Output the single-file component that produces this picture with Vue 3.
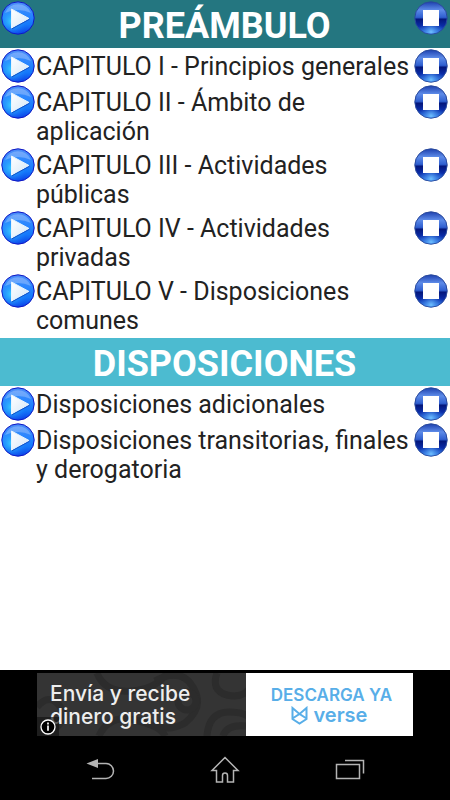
<template>
  <!-- shared gradients and symbols for the round buttons -->
  <svg class="defs" width="0" height="0" aria-hidden="true">
    <defs>
      <linearGradient id="play-ball" x1="0" y1="0" x2="0" y2="1">
        <stop offset="0" stop-color="#4d8df8" />
        <stop offset="0.4" stop-color="#2a86ff" />
        <stop offset="0.7" stop-color="#1478fa" />
        <stop offset="1" stop-color="#0b3fe6" />
      </linearGradient>
      <radialGradient id="play-glow" cx="0.3" cy="0.6" r="0.5">
        <stop offset="0" stop-color="#3ad0ff" />
        <stop offset="1" stop-color="#1a80ff" stop-opacity="0" />
      </radialGradient>
      <linearGradient id="play-arrow" x1="0" y1="0" x2="1" y2="1">
        <stop offset="0" stop-color="#ffffff" />
        <stop offset="1" stop-color="#d3e6f7" />
      </linearGradient>
      <linearGradient id="stop-ball" x1="0" y1="0" x2="0" y2="1">
        <stop offset="0" stop-color="#1c3fae" />
        <stop offset="0.25" stop-color="#5d8be8" />
        <stop offset="0.48" stop-color="#2f5fd0" />
        <stop offset="0.54" stop-color="#04177c" />
        <stop offset="0.75" stop-color="#0a2ca8" />
        <stop offset="1" stop-color="#3a8cf5" />
      </linearGradient>
      <radialGradient id="stop-glow" cx="0.5" cy="0.95" r="0.4">
        <stop offset="0" stop-color="#6fc0ff" />
        <stop offset="1" stop-color="#2a6be0" stop-opacity="0" />
      </radialGradient>
    </defs>
    <symbol id="icon-play" viewBox="0 0 34 34">
      <circle cx="17" cy="17" r="16.2" fill="url(#play-ball)" stroke="#1118c4" stroke-width="1" />
      <circle cx="17" cy="17" r="15.5" fill="url(#play-glow)" />
      <path d="M4 12a14 14 0 0 1 26 0q-13-6-26 0z" fill="#fff" opacity="0.25" />
      <path d="M10.5 8v19L28 17.5z" fill="url(#play-arrow)" stroke="#e8f4ff" stroke-width="1" stroke-linejoin="round" />
      <path d="M11 27.8l17.5-9.6" stroke="#1252c8" stroke-width="1" />
    </symbol>
    <symbol id="icon-stop" viewBox="0 0 34 34">
      <circle cx="17" cy="17" r="16.2" fill="url(#stop-ball)" stroke="#2a4a9c" stroke-width="1" />
      <circle cx="17" cy="17" r="15.5" fill="url(#stop-glow)" />
      <path d="M9 9h16v16H9z" fill="#fff" />
    </symbol>
  </svg>

  <div class="screen">
    <main class="content">
      <section v-for="section in sections" :key="section.title">
        <header class="bar" :class="section.tone">
          <button v-if="section.audio" class="round" :aria-label="`Reproducir ${section.title}`">
            <svg viewBox="0 0 34 34"><use href="#icon-play" /></svg>
          </button>
          <h2>{{ section.title }}</h2>
          <button v-if="section.audio" class="round" :aria-label="`Detener ${section.title}`">
            <svg viewBox="0 0 34 34"><use href="#icon-stop" /></svg>
          </button>
        </header>
        <ul class="list">
          <li v-for="item in section.items" :key="item" class="row">
            <button class="round" :aria-label="`Reproducir ${item}`">
              <svg viewBox="0 0 34 34"><use href="#icon-play" /></svg>
            </button>
            <a href="#" class="label">{{ item }}</a>
            <button class="round" :aria-label="`Detener ${item}`">
              <svg viewBox="0 0 34 34"><use href="#icon-stop" /></svg>
            </button>
          </li>
        </ul>
      </section>
    </main>

    <footer class="bottom">
      <a href="#" class="ad">
        <span class="ad-text">
          <svg class="ad-pattern" viewBox="0 0 209 63" preserveAspectRatio="xMidYMid slice" aria-hidden="true">
            <g fill="none" stroke="#2c2c2c" stroke-width="7">
              <path d="M0 34q12-14 22-2t-4 24" />
              <path d="M60 0q8 20 34 18t36-18" />
              <path d="M118 8q26-14 38 6t-8 36q-18 10-32 0" />
              <circle cx="150" cy="28" r="9" />
              <path d="M180 0q-6 18 10 22t24-8" />
              <path d="M170 63q2-24 22-24t24 10" />
              <path d="M186 63q4-12 23-10" />
              <path d="M62 63q10-22 36-16t30 16" />
            </g>
          </svg>
          <span class="ad-copy">Envía y recibe<br />dinero gratis</span>
          <svg class="ad-info" viewBox="0 0 22 19" aria-hidden="true">
            <path d="M0 0h22v19H0z" fill="#161616" fill-opacity="0.7" />
            <circle cx="11" cy="10" r="7" fill="#000" stroke="#fff" stroke-width="1.3" />
            <path d="M11 5.6v1.8M11 8.6v5.2" stroke="#fff" stroke-width="1.7" />
          </svg>
        </span>
        <span class="ad-action">
          <span class="ad-cta">DESCARGA YA</span>
          <span class="brand">
            <svg viewBox="0 0 17 19" aria-hidden="true">
              <path d="M1.5 2v11l7 4.5 7-4.5V2l-7 6zM1.5 12.5L8.5 8l7 4.5" />
            </svg>
            <span>verse</span>
          </span>
        </span>
      </a>

      <nav class="nav">
        <button aria-label="Atrás">
          <svg viewBox="0 0 30 30">
            <path d="M8 8.5h13a7 7 0 0 1 0 15H7" />
            <path d="M1.5 8.5L13 4v9z" class="solid" />
          </svg>
        </button>
        <button aria-label="Inicio">
          <svg viewBox="0 0 30 30">
            <path d="M15 2.500L2 15.500h4.500V27h6v-6.500q0-2.500 2.500-2.500t2.500 2.500V27h6V15.500H28z" />
          </svg>
        </button>
        <button aria-label="Recientes">
          <svg viewBox="0 0 30 30">
            <path d="M1.5 9.5h23v14h-23zM10 5.5h18.5v13" />
          </svg>
        </button>
      </nav>
    </footer>
  </div>
</template>

<script setup>
const sections = [
  {
    title: 'PREÁMBULO',
    tone: 'dark',
    audio: true,
    items: [
      'CAPITULO I - Principios generales',
      'CAPITULO II - Ámbito de aplicación',
      'CAPITULO III - Actividades públicas',
      'CAPITULO IV - Actividades privadas',
      'CAPITULO V - Disposiciones comunes'
    ]
  },
  {
    title: 'DISPOSICIONES',
    tone: 'light',
    audio: false,
    items: [
      'Disposiciones adicionales',
      'Disposiciones transitorias, finales y derogatoria'
    ]
  }
]
</script>

<style>
body {
  margin: 0;
  background: #fff;
}
</style>

<style scoped>
.defs {
  position: absolute;
}

.screen {
  display: flex;
  flex-direction: column;
  min-height: 100vh;
  font-family: Roboto, sans-serif;
  color: #222;
}

.content {
  flex: 1;
}

.bar {
  display: flex;
  align-items: flex-start;
  padding: 1px 2px 0 1px;
  color: #fff;
}

.bar.dark {
  background: #247680;
}

.bar.light {
  background: #4cbbd0;
}

.bar h2 {
  flex: 1;
  margin: 0;
  padding-top: 3px;
  font-size: 36px;
  line-height: 44px;
  font-weight: 700;
  text-align: center;
}

button {
  padding: 0;
  border: 0;
  background: none;
  cursor: pointer;
}

.round {
  flex: none;
  width: 34px;
  height: 34px;
}

.round svg {
  display: block;
  width: 100%;
  height: 100%;
}

.list {
  margin: 0;
  padding: 1px 0;
  list-style: none;
}

.row {
  display: flex;
  align-items: flex-start;
  gap: 1px;
  min-height: 35px;
  padding: 0 2px 1px 1px;
}

.label {
  flex: 1;
  padding: 3px 0 1px;
  font-size: 25px;
  line-height: 29px;
  color: inherit;
  text-decoration: none;
}

.bottom {
  padding-top: 3px;
  background: #000;
}

.ad {
  display: flex;
  max-width: 376px;
  height: 63px;
  margin: 0 auto;
  font-family: Inter, sans-serif;
  text-decoration: none;
}

.ad-text {
  position: relative;
  flex: 5;
  background: #343434;
  color: #eee;
}

.ad-pattern {
  position: absolute;
  width: 100%;
  height: 100%;
}

.ad-copy {
  position: relative;
  display: block;
  padding: 9px 0 0 13px;
  font-size: 21px;
  line-height: 23px;
  font-weight: 500;
  white-space: nowrap;
}

.ad-info {
  position: absolute;
  left: 0;
  bottom: 0;
  width: 22px;
  height: 19px;
}

.ad-action {
  flex: 4;
  display: flex;
  flex-direction: column;
  align-items: center;
  padding-top: 12px;
  background: #fff;
  color: #58aee8;
}

.ad-cta {
  padding-left: 4px;
  font-size: 17px;
  line-height: 20px;
  font-weight: 600;
}

.brand {
  display: flex;
  align-items: center;
  gap: 5px;
  font-size: 20px;
  line-height: 20px;
  font-weight: 600;
}

.brand svg {
  width: 17px;
  height: 19px;
  fill: none;
  stroke: currentColor;
  stroke-width: 2;
}

.nav {
  display: flex;
  justify-content: center;
  padding: 19px 37px 15px;
}

.nav button {
  flex: 1;
  height: 30px;
}

.nav svg {
  width: 30px;
  height: 30px;
  fill: none;
  stroke: #b4b4b4;
  stroke-width: 1.5;
}

.nav .solid {
  fill: #b4b4b4;
  stroke: none;
}
</style>
